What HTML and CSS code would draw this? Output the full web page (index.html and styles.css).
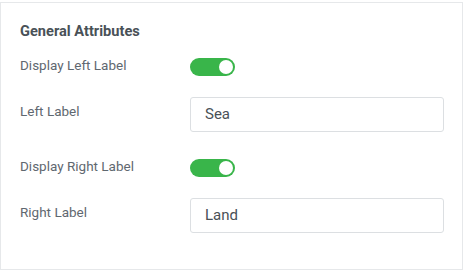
FILE: index.html
```html
<!DOCTYPE html>
<html>
<head>
<meta charset="utf-8">
<link rel="stylesheet" href="styles.css">
</head>
<body>
<div class="panel">
  <div class="title">General Attributes</div>
  <div class="rows">
    <div class="row row-toggle">
      <div class="label">Display Left Label</div>
      <div class="toggle on"><span class="knob"></span></div>
    </div>
    <div class="row row-input">
      <div class="label">Left Label</div>
      <div class="input">Sea</div>
    </div>
    <div class="row row-toggle">
      <div class="label">Display Right Label</div>
      <div class="toggle on"><span class="knob"></span></div>
    </div>
    <div class="row row-input">
      <div class="label">Right Label</div>
      <div class="input">Land</div>
    </div>
  </div>
</div>
</body>
</html>
```

FILE: styles.css
```css
html, body {
  margin: 0;
  padding: 0;
  background: #ffffff;
}

body {
  font-family: Roboto, "Liberation Sans", sans-serif;
  padding-top: 2px;
}

.panel {
  width: 463px;
  height: 268px;
  box-sizing: border-box;
  border: 1px solid #e6e8ea;
  background: #ffffff;
  padding: 18px 18px 0 19px;
}

.title {
  font-size: 14.6px;
  line-height: 20px;
  font-weight: 700;
  color: #495157;
}

.rows {
  display: flex;
  flex-direction: column;
  gap: 24px;
  margin-top: 14px;
}

.row {
  display: grid;
  grid-template-columns: 170px 254px;
}

.row-toggle {
  align-items: center;
  height: 18px;
}

.row-toggle .label {
  margin-bottom: 3px;
}

.row-input .label {
  padding-top: 4px;
}

.label {
  font-size: 13.5px;
  line-height: 20px;
  color: #5f6870;
}

.toggle {
  width: 45px;
  height: 18px;
  border-radius: 9px;
  background: #39b54a;
  display: flex;
  align-items: center;
  justify-content: flex-end;
  padding: 0 2px;
  box-sizing: border-box;
}

.knob {
  width: 14px;
  height: 14px;
  border-radius: 50%;
  background: #ffffff;
}

.input {
  height: 35px;
  box-sizing: border-box;
  border: 1px solid #dcdfe2;
  border-radius: 3px;
  padding: 0 14px;
  font-size: 15px;
  line-height: 33px;
  color: #495157;
}
```
